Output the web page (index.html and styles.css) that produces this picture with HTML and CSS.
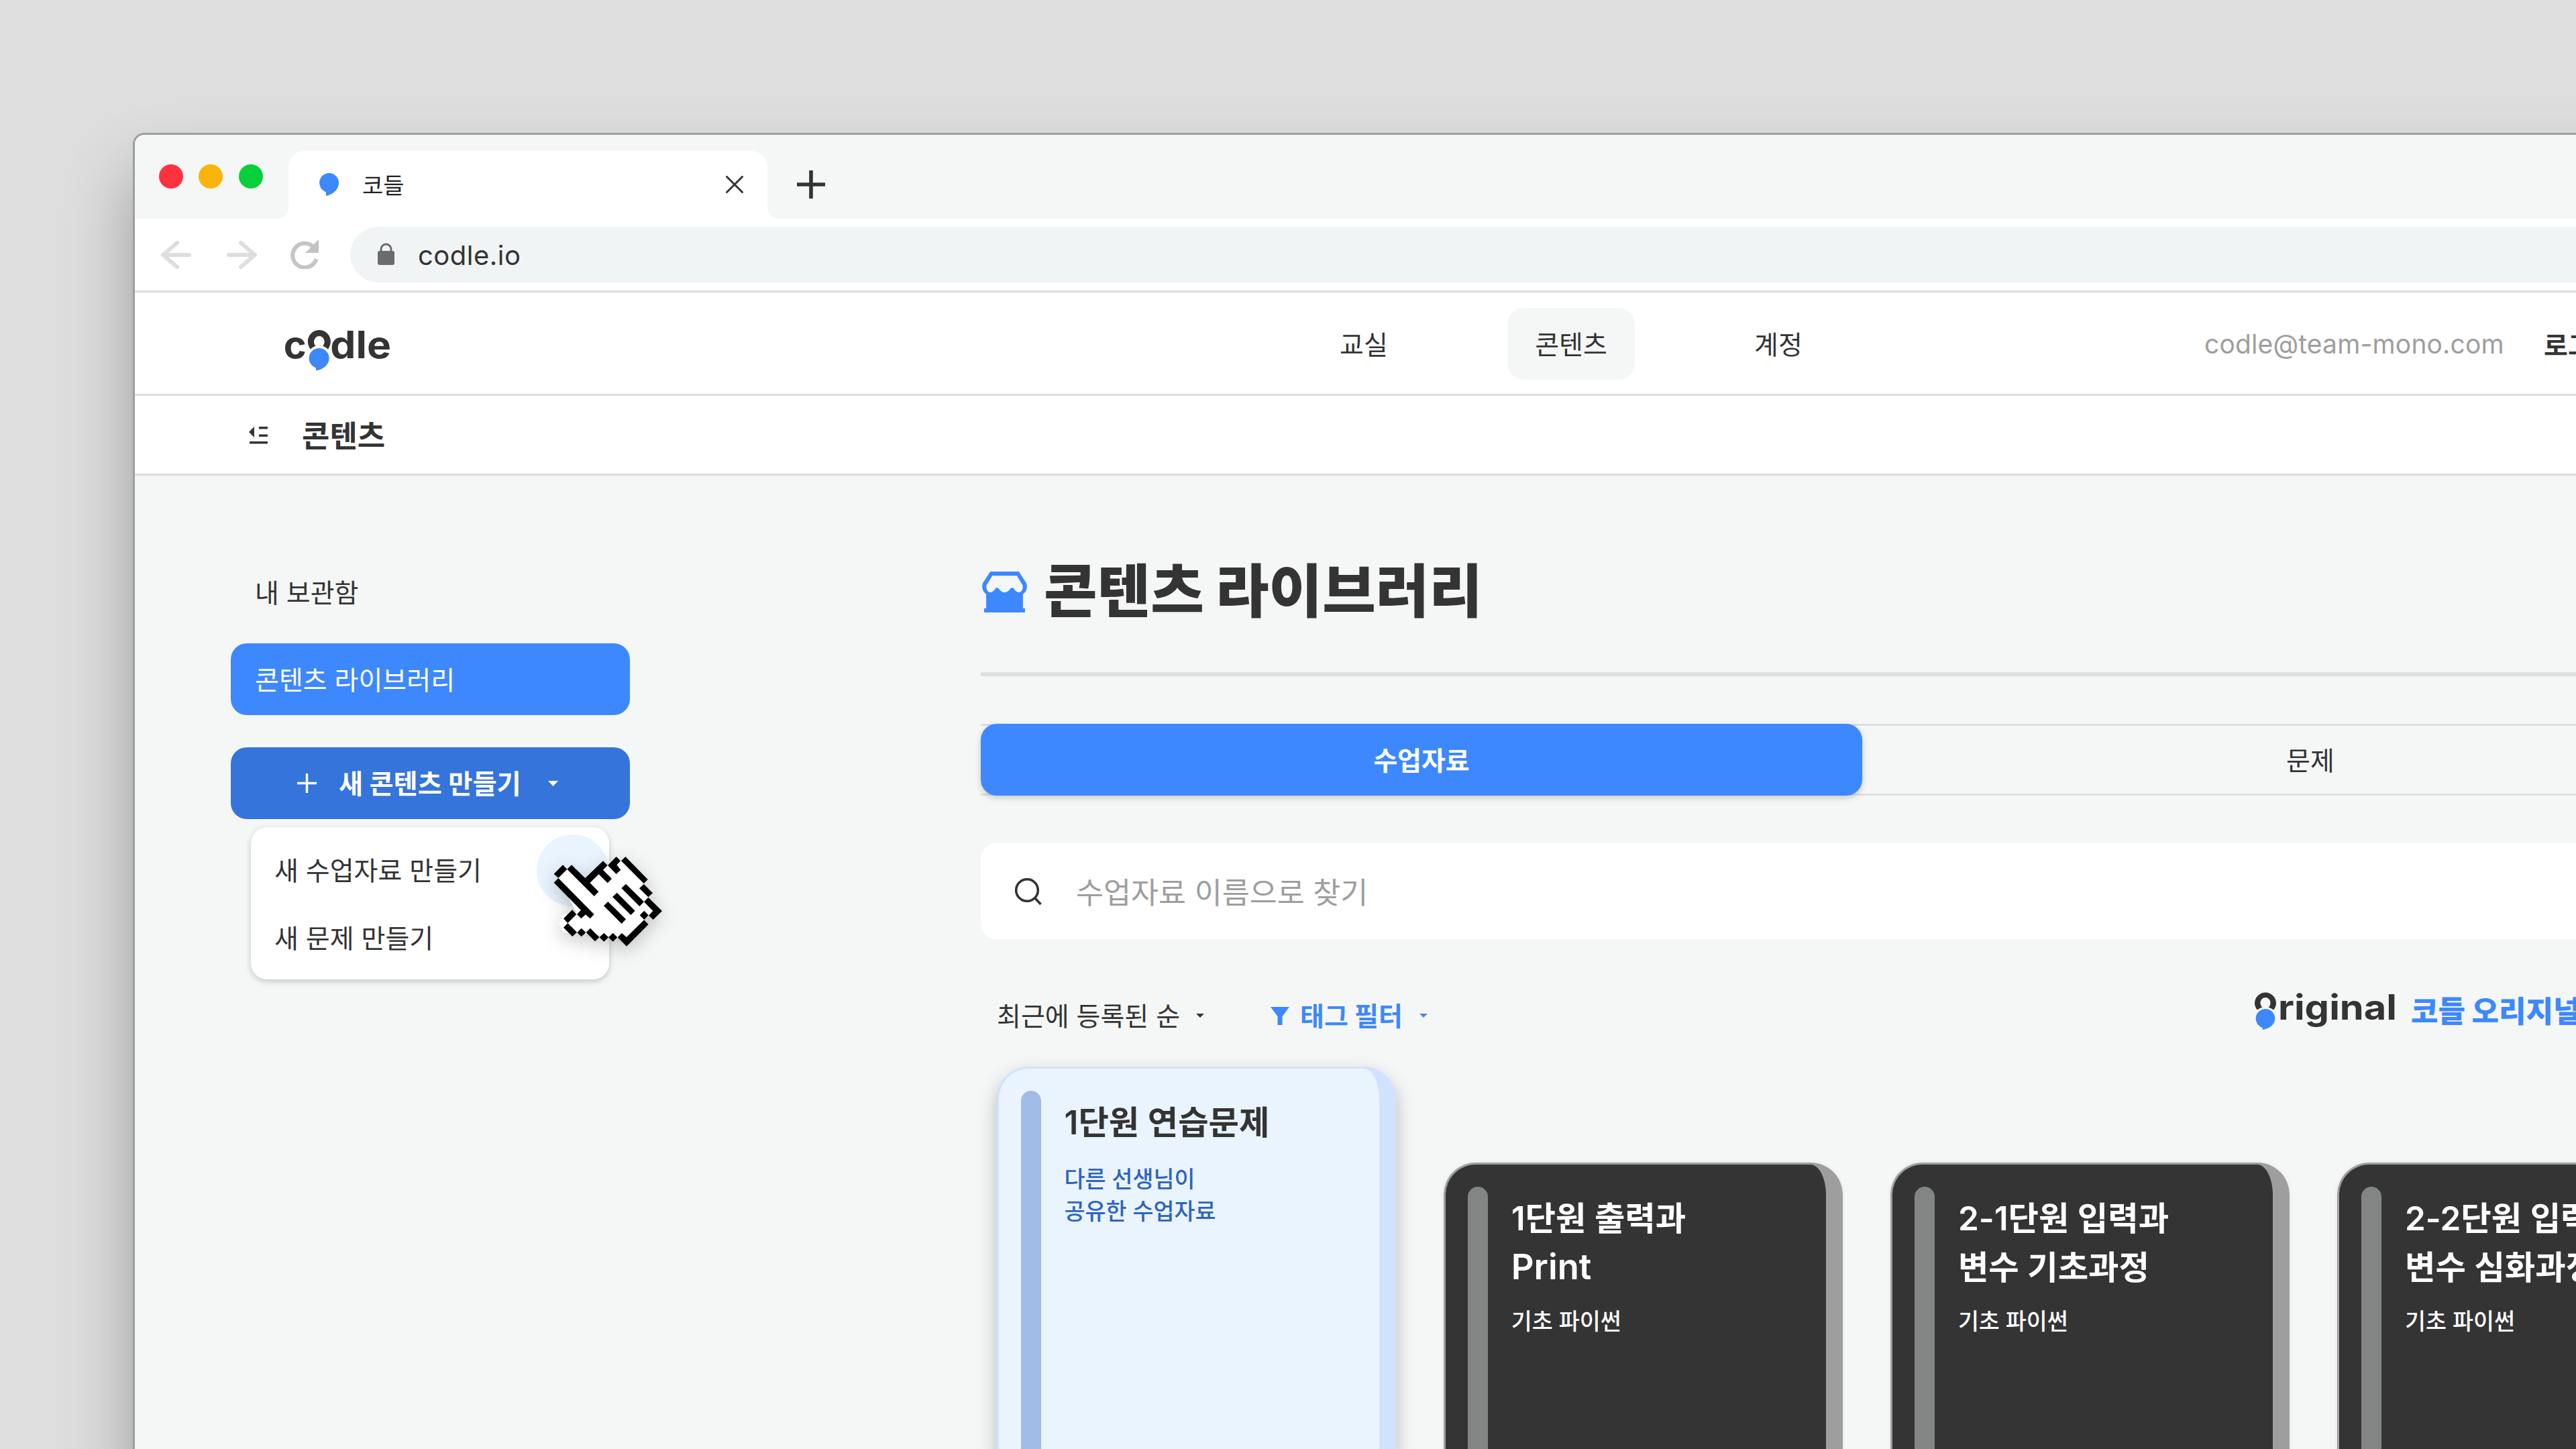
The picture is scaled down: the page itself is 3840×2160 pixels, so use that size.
FILE: index.html
```html
<!DOCTYPE html>
<html lang="ko">

<head>
    <meta charset="UTF-8">
    <meta name="viewport" content="width=device-width, initial-scale=1.0">
    <title>코들</title>
    <link rel="stylesheet" href="styles.css">
</head>

<body>
    <div class="window">

        <!-- Browser tabs -->
        <div class="tab-strip">
            <div class="lights">
                <span class="light red"></span>
                <span class="light yellow"></span>
                <span class="light green"></span>
            </div>
            <div class="browser-tab">
                <svg class="favicon" viewBox="0 0 29 34">
                    <path fill="#3d88ff" d="M14.500 0a14.500 14.500 0 0 0-4.600 28.200V34C19 32.500 29 25.500 29 14.500A14.500 14.500 0 0 0 14.500 0z" />
                </svg>
                <span class="tab-title">코들</span>
                <svg class="tab-close" viewBox="0 0 26 26">
                    <path d="M1.500 1.500l23 23M24.500 1.500l-23 23" stroke="#343434" stroke-width="3" stroke-linecap="round" />
                </svg>
            </div>
            <svg class="tab-new" viewBox="0 0 42 42">
                <path d="M21 0v42M0 21h42" stroke="#343434" stroke-width="5.600" />
            </svg>
        </div>

        <!-- Address bar -->
        <div class="toolbar">
            <svg class="arrow" viewBox="0 0 46 42">
                <path d="M43 21H4M25 3L4 21l21 18" fill="none" stroke="#dedede" stroke-width="6" stroke-linecap="round" stroke-linejoin="round" />
            </svg>
            <svg class="arrow" viewBox="0 0 46 42">
                <path d="M3 21h39M21 3l21 18-21 18" fill="none" stroke="#dedede" stroke-width="6" stroke-linecap="round" stroke-linejoin="round" />
            </svg>
            <svg class="reload" viewBox="0 0 42 44">
                <path d="M38.500 29A18 18 0 1 1 34 11" fill="none" stroke="#c4c4c4" stroke-width="6" />
                <path d="M42 0v20H22z" fill="#c4c4c4" />
            </svg>
            <div class="address">
                <svg class="lock" viewBox="0 0 25 33">
                    <rect y="12" width="25" height="21" rx="3" fill="#6b6b6b" />
                    <path d="M5 14V9.500a7.500 7.500 0 0 1 15 0V14" fill="none" stroke="#6b6b6b" stroke-width="3" />
                </svg>
                <span class="url">codle.io</span>
            </div>
        </div>

        <!-- Site header -->
        <header class="header">
            <svg class="logo" viewBox="0 0 570 240">
                <text class="logo-text" x="38" y="163" textLength="102" lengthAdjust="spacingAndGlyphs">c</text>
                <path fill="#343434" fill-rule="evenodd" d="M197.500 36a51 51 0 0 1 51 51q0 18-12 35l-78 0q-12-17-12-35a51 51 0 0 1 51-51zM197.500 63a23.500 25 0 0 0-23.500 25q0 14 12 24h23q12-10 12-24a23.500 25 0 0 0-23.500-25z" />
                <path fill="#3d88ff" stroke="#fff" stroke-width="22" paint-order="stroke" d="M197 117a45 45 0 0 0-14 87.800V217C213 214 242 192 242 162a45 45 0 0 0-45-45z" />
                <text class="logo-text" x="247" y="163" textLength="272" lengthAdjust="spacingAndGlyphs">dle</text>
            </svg>
            <nav class="nav">
                <a class="nav-item">교실</a>
                <a class="nav-item active">콘텐츠</a>
                <a class="nav-item">계정</a>
            </nav>
            <div class="account">
                <span class="email">codle@team-mono.com</span>
                <span class="logout">로그아웃</span>
            </div>
        </header>

        <div class="sub-header">
            <svg class="fold" viewBox="0 0 28 26">
                <path fill="#343434" d="M8 0v16L0 8zM15 0h13v3.500H15zM15 11.500h13V15H15zM1 22h27v3.500H1z" />
            </svg>
            <h2>콘텐츠</h2>
        </div>

        <div class="page">
            <aside class="sidebar">
                <div class="side-item">내 보관함</div>
                <div class="side-item selected">콘텐츠 라이브러리</div>
                <div class="create-button">
                    <svg class="plus" viewBox="0 0 28 28">
                        <path d="M14 0v28M0 14h28" stroke="#fff" stroke-width="3.400" />
                    </svg>
                    <span>새 콘텐츠 만들기</span>
                    <svg class="caret" viewBox="0 0 15 8">
                        <path d="M0 0h15L7.500 8z" fill="#fff" />
                    </svg>
                </div>
                <div class="menu">
                    <span class="ripple"></span>
                    <div class="menu-item">새 수업자료 만들기</div>
                    <div class="menu-item">새 문제 만들기</div>
                </div>
            </aside>

            <main class="content">
                <div class="title-row">
                    <svg class="store" viewBox="0 0 66 60">
                        <path fill="#3d88ff" d="M12 0h42l11 17q3 10-5 16.500V54h3v6H3v-6h3V33.500Q-2 27 1 17z" />
                        <path fill="#f5f7f7" d="M15 6h36l8.500 14q1.500 9-5 10.500-5 0-8.500-6.500-2-.5-3.500 0Q38 30.500 33 30.500T23.500 24q-2-.5-3.500 0-3.500 6.500-8.500 6.500-6.500-1.500-5-10.500z" />
                    </svg>
                    <h1>콘텐츠 라이브러리</h1>
                </div>

                <div class="tabs">
                    <div class="tab active">수업자료</div>
                    <div class="tab">문제</div>
                </div>

                <div class="search">
                    <svg class="search-icon" viewBox="0 0 40 41">
                        <circle cx="18" cy="18" r="16.300" fill="none" stroke="#343434" stroke-width="3.600" />
                        <path d="M29.500 29.500l9 9.500" stroke="#343434" stroke-width="3.600" />
                    </svg>
                    <span>수업자료 이름으로 찾기</span>
                </div>

                <div class="filters">
                    <span class="sort">최근에 등록된 순</span>
                    <svg class="small-caret" viewBox="0 0 12 6">
                        <path d="M0 0h12L6 6z" fill="#343434" />
                    </svg>
                    <svg class="funnel" viewBox="0 0 28 27">
                        <path d="M0 0h28L17.500 14v13h-7V14z" fill="#3d88ff" />
                    </svg>
                    <span class="tag-filter">태그 필터</span>
                    <svg class="small-caret" viewBox="0 0 12 6">
                        <path d="M0 0h12L6 6z" fill="#3d88ff" />
                    </svg>
                    <div class="original">
                        <svg class="original-logo" viewBox="0 0 212 66">
                            <path fill="#343434" fill-rule="evenodd" d="M17 6.500a16 16 0 0 1 16 16q0 5-3.500 9.500h-25Q1 27.500 1 22.500a16 16 0 0 1 16-16zM17 14a7.500 8 0 0 0-7.500 8q0 4.500 4 7.500h7q4-3 4-7.500A7.500 8 0 0 0 17 14z" />
                            <path fill="#3d88ff" stroke="#f5f7f7" stroke-width="6" paint-order="stroke" d="M17 31a14.300 14.300 0 0 0-4.500 27.900V62C22 61 31.300 54.500 31.300 45.300A14.300 14.300 0 0 0 17 31z" />
                            <text class="original-text" x="36" y="46.500" textLength="177" lengthAdjust="spacingAndGlyphs">riginal</text>
                        </svg>
                        <span>코들 오리지널</span>
                    </div>
                </div>

                <div class="books">
                    <div class="book light-book">
                        <span class="spine"></span>
                        <div class="book-text">
                            <h3>1단원 연습문제</h3>
                            <p>다른 선생님이<br>공유한 수업자료</p>
                        </div>
                    </div>
                    <div class="book">
                        <span class="spine"></span>
                        <div class="book-text">
                            <h3>1단원 출력과<br><span class="latin">Print</span></h3>
                            <p>기초 파이썬</p>
                        </div>
                    </div>
                    <div class="book">
                        <span class="spine"></span>
                        <div class="book-text">
                            <h3>2-1단원 입력과<br>변수 기초과정</h3>
                            <p>기초 파이썬</p>
                        </div>
                    </div>
                    <div class="book">
                        <span class="spine"></span>
                        <div class="book-text">
                            <h3>2-2단원 입력과<br>변수 심화과정</h3>
                            <p>기초 파이썬</p>
                        </div>
                    </div>
                </div>
            </main>
        </div>
    </div>

    <!-- Hand pointer -->
    <svg class="pointer" viewBox="0 0 660 600">
        <path fill="#fff" d="M97 207l39-40 81 61 80-78 21 0 38-20 41 1 82 100 11 29 9 33 41 61-19 19-20 1-20 20-1 20-78 78-40-19-162-21-20-1-40 0-20-1-21-41 20-39 19 0 40-9z" />
        <path d="M77 188l40-40 19 19-39 39zM77 227l20-20 160 162-18 19-20-18-20 18-19-19 18-19zM136 167l20-19 61 59 80-77 20 20-20 20 39 40-19 19-39-39-40 38 39 40-20 20zM318 150l38-39 19 19-17 18 18 22-20 19zM378 130l19-19 100 102-18 18zM479 233l40 41-20 18-40-39zM480 313l19-20 62 61-40 39-20-19 19-20zM481 353l19 20-19 20-20-20zM480 394l20 20-98 98-40-40 19-19 21 18zM341 452l20 20-20 19-20-19zM301 452l20 20-20 19-20-19zM240 431l40 40-19 19-40-40zM200 431l20 19-20 19-19-19zM139 408l41 41-20 19-40-40zM120 388l39-39 19 20-39 39zM399 233l81 80-20 20-81-81zM359 272l81 81-19 19-82-81zM319 312l80 79-19 20-80-80z" />
    </svg>
</body>

</html>
```

FILE: styles.css
```css
* {
    box-sizing: border-box;
}

body {
    position: relative;
    margin: 0;
    padding: 198px 0 0 198px;
    width: 3840px;
    height: 2160px;
    overflow: hidden;
    background-color: #dedede;
    color: #343434;
    font-family: "Inter", "Noto Sans CJK KR", sans-serif;
    font-size: 39px;
    white-space: nowrap;
}

h1,
h2,
h3,
p {
    margin: 0;
}

svg {
    display: block;
    flex-shrink: 0;
}

.window {
    width: 4000px;
    height: 2300px;
    border: 3px solid #9e9e9e;
    border-radius: 17px;
    background-color: #f5f7f7;
    box-shadow: 0 60px 100px rgba(0, 0, 0, 0.3);
    overflow: hidden;
}

/* browser chrome */

.tab-strip {
    display: flex;
    height: 125px;
}

.lights {
    display: flex;
    gap: 23.500px;
    width: 229px;
    padding: 44px 0 0 35.500px;
}

.light {
    width: 36px;
    height: 36px;
    border-radius: 50%;
}

.red {
    background-color: #ff323f;
}

.yellow {
    background-color: #fab40b;
}

.green {
    background-color: #08d03c;
}

.browser-tab {
    position: relative;
    display: flex;
    align-items: center;
    width: 714px;
    height: 101px;
    margin-top: 24px;
    padding: 0 36px 2px 46px;
    border-radius: 24px 24px 0 0;
    background-color: #fff;
}

.browser-tab::before,
.browser-tab::after {
    content: "";
    position: absolute;
    bottom: 0;
    width: 16px;
    height: 16px;
}

.browser-tab::before {
    left: -16px;
    background: radial-gradient(circle at 0 0, transparent 15.500px, #fff 16px);
}

.browser-tab::after {
    right: -16px;
    background: radial-gradient(circle at 100% 0, transparent 15.500px, #fff 16px);
}

.favicon {
    width: 29px;
    height: 34px;
}

.tab-title {
    flex: 1;
    margin-left: 35px;
    font-size: 34px;
    color: #222;
}

.tab-close {
    width: 26px;
    height: 26px;
}

.tab-new {
    width: 42px;
    height: 42px;
    margin: 53px 0 0 44px;
}

.toolbar {
    display: flex;
    align-items: center;
    height: 110px;
    padding-left: 38px;
    border-bottom: 3px solid #dcdede;
    background-color: #fff;
}

.arrow {
    width: 46px;
    height: 42px;
    margin-right: 53px;
}

.reload {
    width: 42px;
    height: 44px;
    margin: -2px 0 0 -4px;
}

.address {
    display: flex;
    align-items: center;
    width: 3600px;
    height: 83px;
    margin-left: 47px;
    padding: 0 0 2px 41px;
    border-radius: 42px;
    background-color: #f0f4f5;
}

.lock {
    width: 25px;
    height: 33px;
}

.url {
    margin-left: 35px;
    padding-top: 4px;
    font-size: 40px;
    letter-spacing: 0.500px;
}

/* site header */

.header {
    display: flex;
    align-items: center;
    height: 154px;
    border-bottom: 3px solid #dcdede;
    background-color: #fff;
}

.logo {
    width: 190px;
    height: 80px;
    margin: 16px 0 0 209px;
}

.logo-text {
    font-family: "Inter", sans-serif;
    font-size: 168px;
    font-weight: 700;
    fill: #343434;
}

.nav {
    display: flex;
    gap: 119px;
    margin: 2px 0 0 1338px;
}

.nav-item {
    display: flex;
    align-items: center;
    justify-content: center;
    width: 190px;
    height: 107px;
    padding-bottom: 3px;
    border-radius: 24px;
}

.nav-item.active {
    background-color: #f5f7f7;
}

.account {
    display: flex;
    align-items: center;
    margin-left: 540px;
}

.email {
    width: 506px;
    padding-top: 1px;
    color: #9e9e9e;
    letter-spacing: 0.150px;
}

.logout {
    font-weight: 700;
}

.sub-header {
    display: flex;
    align-items: center;
    height: 119px;
    padding: 2px 0 0 170px;
    border-bottom: 3px solid #dcdede;
    background-color: #fff;
}

.fold {
    width: 28px;
    height: 26px;
}

.sub-header h2 {
    margin: -4px 0 0 51px;
    font-size: 45px;
    font-weight: 700;
}

/* page */

.page {
    display: flex;
    padding: 120px 0 0 143px;
}

.sidebar {
    width: 595px;
}

.side-item {
    display: flex;
    align-items: center;
    height: 107px;
    margin-bottom: 23px;
    padding: 0 0 4px 36px;
    border-radius: 24px;
}

.side-item.selected {
    background-color: #3d88ff;
    color: #fff;
}

.create-button {
    display: flex;
    align-items: center;
    height: 107px;
    margin-top: 48px;
    padding-left: 99px;
    border-radius: 24px;
    background-color: #3574db;
    color: #fff;
    font-weight: 700;
}

.plus {
    width: 29px;
    height: 29px;
    margin-right: 33px;
}

.create-button span {
    width: 312px;
    padding-bottom: 4px;
    font-size: 39.300px;
}

.caret {
    width: 15px;
    height: 8px;
}

.menu {
    position: relative;
    width: 534px;
    height: 227px;
    margin: 12px 0 0 30px;
    padding: 11px 0 0 35px;
    border-radius: 24px;
    background-color: #fff;
    box-shadow: 0 3px 10px rgba(0, 0, 0, 0.2);
}

.menu-item {
    position: relative;
    display: flex;
    align-items: center;
    height: 101px;
}

.ripple {
    position: absolute;
    top: 11px;
    right: 1px;
    width: 107px;
    height: 107px;
    border-radius: 50%;
    background-color: #e9f4ff;
}

.content {
    width: 2650px;
    margin-left: 523px;
    flex-shrink: 0;
}

.title-row {
    display: flex;
    align-items: center;
    height: 179px;
    padding: 0 0 69px 2px;
    border-bottom: 6px solid #dedfdf;
}

.store {
    width: 67px;
    height: 61px;
    margin-top: 2px;
}

.title-row h1 {
    margin: -12px 0 0 25px;
    font-size: 86.500px;
    font-weight: 900;
}

.tabs {
    display: flex;
    height: 107px;
    margin-top: 71px;
    border-top: 3px solid #dedfdf;
    border-bottom: 3px solid #dedfdf;
}

.tab {
    display: flex;
    flex: 1;
    align-items: center;
    justify-content: center;
    padding-bottom: 4px;
}

.tab.active {
    flex: none;
    width: 1314px;
    margin: -3px 0;
    border-radius: 24px;
    background-color: #3d88ff;
    color: #fff;
    font-weight: 700;
    box-shadow: 0 3px 10px rgba(0, 0, 0, 0.2);
}

.search {
    display: flex;
    align-items: center;
    height: 143px;
    margin-top: 71px;
    padding: 0 0 1px 51px;
    border-radius: 24px;
    background-color: #fff;
    color: #9e9e9e;
    font-size: 44.600px;
}

.search-icon {
    width: 40px;
    height: 41px;
    margin: 2px 51px 0 0;
}

.search span {
    padding-bottom: 2px;
}

.filters {
    display: flex;
    align-items: center;
    height: 190px;
    padding: 64px 0 26px 24px;
}

.sort {
    width: 297px;
    padding-bottom: 4px;
}

.small-caret {
    width: 12px;
    height: 6px;
}

.funnel {
    width: 28px;
    height: 27px;
    margin: 0 16px 0 99px;
}

.tag-filter {
    width: 178px;
    padding-bottom: 4px;
    color: #3d88ff;
    font-weight: 700;
}

.original {
    display: flex;
    align-items: center;
    margin: -16px 0 0 1232px;
    color: #3d88ff;
    font-size: 44px;
    font-weight: 800;
}

.original span {
    padding-bottom: 2px;
}

.original-logo {
    width: 212px;
    height: 66px;
    margin-right: 22px;
}

.original-text {
    font-family: "Inter", sans-serif;
    font-size: 52px;
    font-weight: 700;
    fill: #343434;
}

/* books */

.books {
    display: flex;
    gap: 70.700px;
    padding-left: 23.500px;
}

.book {
    display: flex;
    flex-shrink: 0;
    width: 595.500px;
    height: 830px;
    margin-top: 143px;
    padding: 33px 0 0 33px;
    border: 3px solid #9e9e9e;
    border-right-width: 25px;
    border-radius: 48px;
    background-color: #343434;
    color: #fff;
    box-shadow: 0 0 6px rgba(0, 0, 0, 0.08);
}

.light-book {
    margin-top: 0;
    border-color: #d0e2ff;
    background-color: #e9f4ff;
    color: #343434;
    box-shadow: 0 12px 28px rgba(0, 0, 0, 0.25);
}

.spine {
    width: 30px;
    border-radius: 15px;
    background-color: #838584;
}

.light-book .spine {
    background-color: #a1bce6;
}

.book-text {
    margin-left: 35px;
    padding-top: 11px;
}

.book h3 {
    font-size: 49.400px;
    font-weight: 600;
    line-height: 73px;
}

.latin {
    font-size: 52.500px;
    font-weight: 600;
    line-height: 1;
}

.book p {
    margin-top: 20px;
    font-size: 33.700px;
    font-weight: 500;
    line-height: 48px;
}

.light-book p {
    margin-top: 24px;
    color: #2f64bf;
}

/* pointer */

.pointer {
    position: absolute;
    top: 1240px;
    left: 800px;
    width: 220px;
    height: 200px;
    overflow: visible;
    filter: drop-shadow(0 8px 14px rgba(0, 0, 0, 0.22));
}
```
